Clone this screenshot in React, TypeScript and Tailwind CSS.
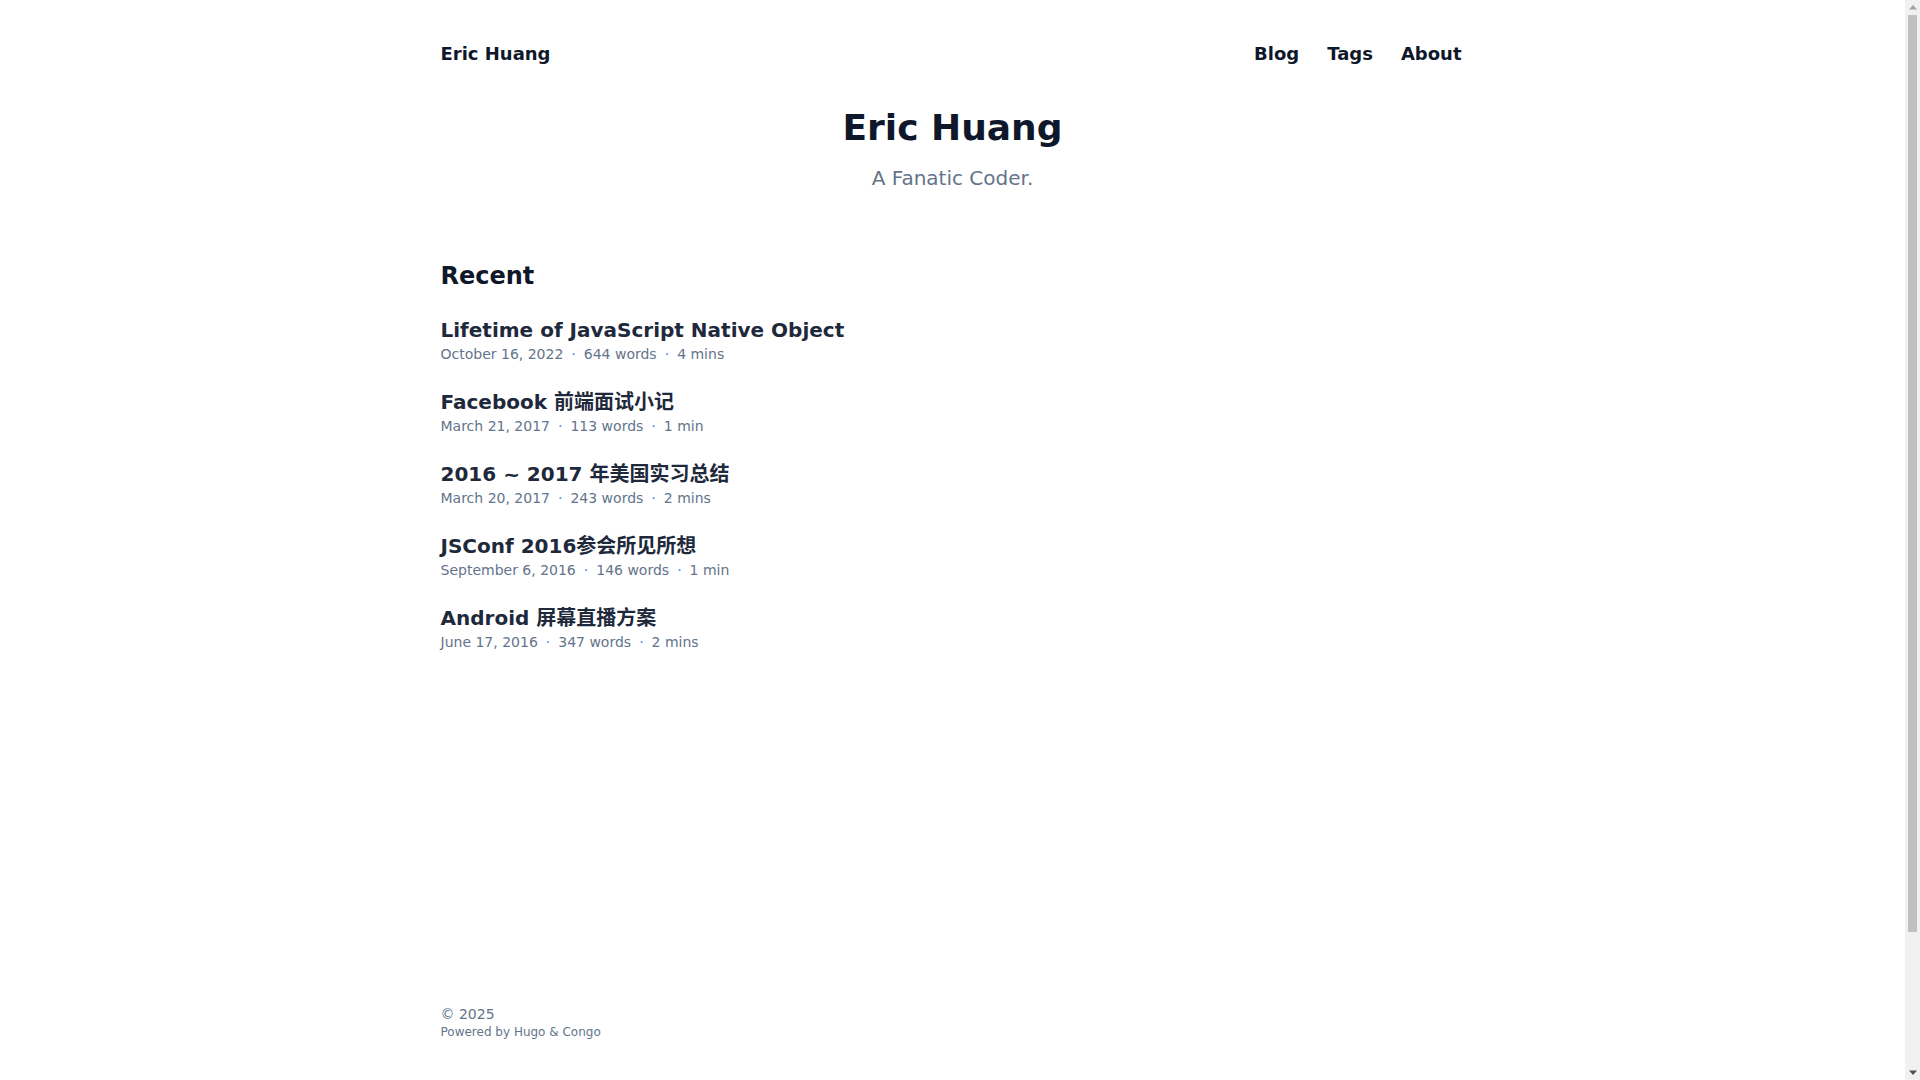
const posts = [
  {
    title: "Lifetime of JavaScript Native Object",
    date: "October 16, 2022",
    words: "644 words",
    time: "4 mins",
  },
  {
    title: "Facebook 前端面试小记",
    date: "March 21, 2017",
    words: "113 words",
    time: "1 min",
  },
  {
    title: "2016 ~ 2017 年美国实习总结",
    date: "March 20, 2017",
    words: "243 words",
    time: "2 mins",
  },
  {
    title: "JSConf 2016参会所见所想",
    date: "September 6, 2016",
    words: "146 words",
    time: "1 min",
  },
  {
    title: "Android 屏幕直播方案",
    date: "June 17, 2016",
    words: "347 words",
    time: "2 mins",
  },
];

export default function App() {
  return (
    <div className="flex h-screen flex-row overflow-hidden bg-white font-['DejaVu_Sans','Noto_Sans_CJK_SC',sans-serif] text-lg leading-7 text-[#0f172a]">
      <div className="min-w-0 flex-1">
        <div className="mx-auto flex h-screen max-w-7xl flex-col px-32">
          <header className="flex flex-row items-center justify-between py-10 font-semibold">
            <a href="#" className="text-lg">
              Eric Huang
            </a>
            <nav className="mr-[3px] flex flex-row gap-7">
              <a href="#">Blog</a>
              <a href="#">Tags</a>
              <a href="#">About</a>
            </nav>
          </header>

          <main className="grow">
            <div className="text-center">
              <h1 className="text-4xl font-extrabold">Eric Huang</h1>
              <p className="mt-4 text-xl text-[#64748b]">A Fanatic Coder.</p>
            </div>

            <section className="mt-[68px]">
              <h2 className="text-2xl font-extrabold">Recent</h2>
              {posts.map((p) => (
                <PostItem key={p.title} {...p} />
              ))}
            </section>
          </main>

          <footer className="py-10 text-[#64748b]">
            <p className="text-sm">© 2025</p>
            <p className="text-xs">
              Powered by <a href="#">Hugo</a> &amp; <a href="#">Congo</a>
            </p>
          </footer>
        </div>
      </div>
      <Scrollbar />
    </div>
  );
}

function PostItem({
  title,
  date,
  words,
  time,
}: {
  title: string;
  date: string;
  words: string;
  time: string;
}) {
  return (
    <article className="mt-6">
      <h3 className="text-xl font-semibold text-[#1e293b]">
        <a href="#">{title}</a>
      </h3>
      <div className="text-sm text-[#64748b]">
        <span>{date}</span>
        <Dot />
        <span>{words}</span>
        <Dot />
        <span>{time}</span>
      </div>
    </article>
  );
}

function Dot() {
  return <span className="px-2 text-[#3b82f6]">·</span>;
}

// window scrollbar as it shows in the screenshot
function Scrollbar() {
  return (
    <div className="flex w-[15px] shrink-0 flex-col bg-[#f1f1f1]">
      <div className="flex h-[15px] items-center justify-center">
        <svg width="8" height="5" viewBox="0 0 8 5">
          <path d="M4 0 L8 4.5 L0 4.5 Z" fill="#a3a3a3" />
        </svg>
      </div>
      <div className="mx-[3px] h-[917px] bg-[#c1c1c1]" />
      <div className="grow" />
      <div className="flex h-[15px] items-center justify-center">
        <svg width="8" height="5" viewBox="0 0 8 5">
          <path d="M0 0.5 L8 0.5 L4 5 Z" fill="#505050" />
        </svg>
      </div>
    </div>
  );
}
